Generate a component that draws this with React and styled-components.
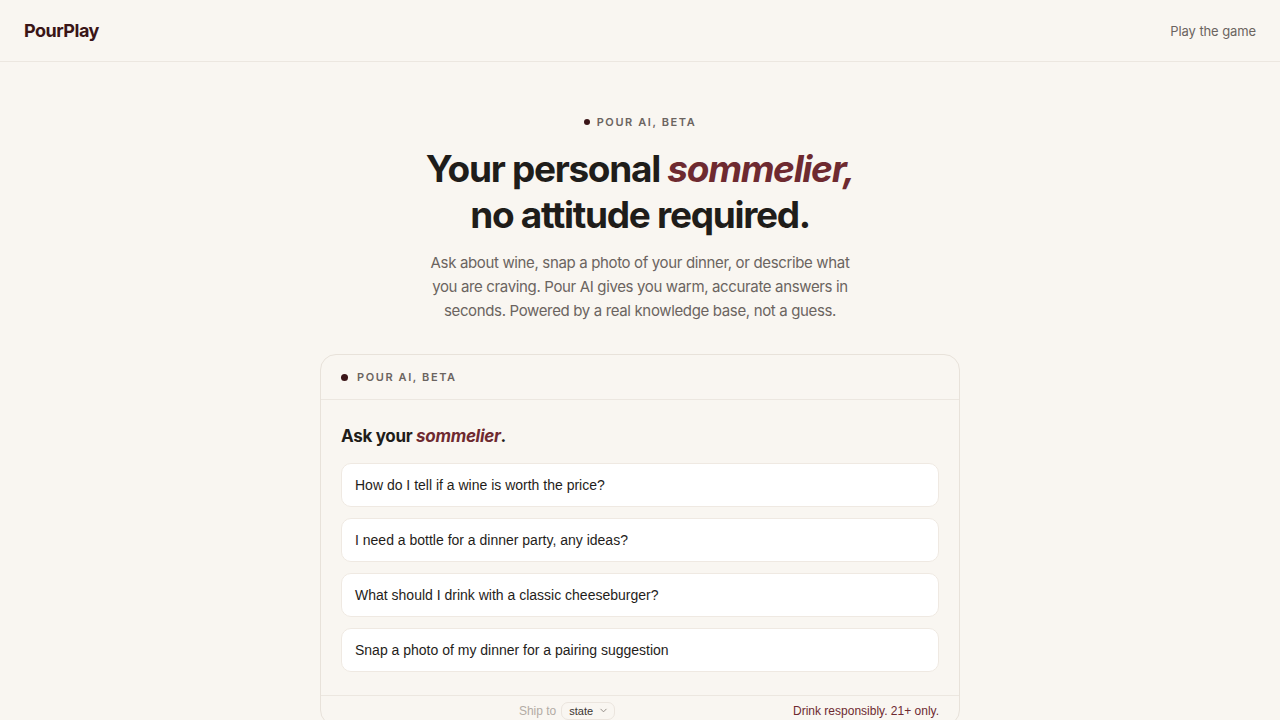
import React from "react";
import styled, { createGlobalStyle } from "styled-components";

const GlobalStyle = createGlobalStyle`
  * { box-sizing: border-box; }
  html, body { margin: 0; padding: 0; }
  body {
    background: #f9f6f1;
    font-family: Inter, "Noto Sans", sans-serif;
    color: #1f1d1a;
    -webkit-font-smoothing: antialiased;
  }
`;

const wine = "#6e2a30";
const ink = "#1f1d1a";
const muted = "#6b6460";

const TopBar = styled.header`
  height: 62px;
  display: flex;
  align-items: center;
  justify-content: space-between;
  padding: 0 24px;
  border-bottom: 1px solid #ece7e0;
`;

const Logo = styled.a`
  font-size: 18px;
  font-weight: 700;
  letter-spacing: -0.5px;
  color: #3a1517;
  text-decoration: none;
`;

const NavLink = styled.a`
  font-size: 13px;
  letter-spacing: -0.1px;
  color: ${muted};
  text-decoration: none;
`;

const Main = styled.main`
  display: flex;
  flex-direction: column;
  align-items: center;
  padding-top: 52px;
`;

const Eyebrow = styled.div`
  display: flex;
  align-items: center;
  gap: 7px;
  font-size: 11px;
  line-height: 16px;
  font-weight: 600;
  letter-spacing: 1.6px;
  text-transform: uppercase;
  color: ${muted};
`;

const Dot = styled.span`
  width: ${(p) => p.$size || 6}px;
  height: ${(p) => p.$size || 6}px;
  border-radius: 50%;
  background: #3b1518;
  flex: none;
`;

const Title = styled.h1`
  margin: 16px 0 0;
  font-size: 37px;
  line-height: 46px;
  font-weight: 700;
  letter-spacing: -1.3px;
  text-align: center;
  color: ${ink};
`;

const Accent = styled.em`
  font-style: italic;
  color: ${wine};
`;

const Lede = styled.p`
  margin: 13px 0 0;
  width: 432px;
  font-size: 15px;
  line-height: 24px;
  letter-spacing: -0.35px;
  text-align: center;
  color: ${muted};
`;

const Card = styled.section`
  margin-top: 31px;
  width: 640px;
  border: 1px solid #e8e2da;
  border-radius: 16px;
  background: #f9f6f1;
  overflow: hidden;
`;

const CardHead = styled.div`
  height: 45px;
  display: flex;
  align-items: center;
  gap: 9px;
  padding: 0 20px;
  border-bottom: 1px solid #ece7e0;
  font-size: 11px;
  font-weight: 600;
  letter-spacing: 1.6px;
  text-transform: uppercase;
  color: ${muted};
`;

const CardBody = styled.div`
  padding: 24px 20px 23px;
`;

const Prompt = styled.h2`
  margin: 0 0 15px;
  font-size: 17px;
  line-height: 24px;
  font-weight: 700;
  letter-spacing: -0.3px;
  color: ${ink};
`;

const Suggestions = styled.div`
  display: flex;
  flex-direction: column;
  gap: 11px;
`;

const Suggestion = styled.button`
  height: 44px;
  display: flex;
  align-items: center;
  padding: 0 13px;
  border: 1px solid #efe9e2;
  border-radius: 10px;
  background: #ffffff;
  font-family: "Liberation Sans", Arial, sans-serif;
  font-size: 14px;
  color: ${ink};
  text-align: left;
  cursor: pointer;
`;

const CardFoot = styled.div`
  height: 30px;
  display: flex;
  align-items: center;
  justify-content: space-between;
  padding: 0 20px;
  border-top: 1px solid #ece7e0;
  font-family: "Liberation Sans", Arial, sans-serif;
  font-size: 12px;
`;

const ShipTo = styled.label`
  display: flex;
  align-items: center;
  gap: 5px;
  color: #b3aca5;
`;

const StatePick = styled.span`
  display: inline-flex;
  align-items: center;
  gap: 6px;
  height: 18px;
  padding: 0 6px 0 7px;
  border: 1px solid #ebe5de;
  border-radius: 7px;
  font-size: 11px;
  color: #3a3531;
`;

const Notice = styled.span`
  color: ${wine};
`;

const prompts = [
  "How do I tell if a wine is worth the price?",
  "I need a bottle for a dinner party, any ideas?",
  "What should I drink with a classic cheeseburger?",
  "Snap a photo of my dinner for a pairing suggestion",
];

export default function App() {
  return (
    <>
      <GlobalStyle />
      <TopBar>
        <Logo href="#">PourPlay</Logo>
        <NavLink href="#">Play the game</NavLink>
      </TopBar>
      <Main>
        <Eyebrow>
          <Dot />
          Pour AI, Beta
        </Eyebrow>
        <Title>
          Your personal <Accent>sommelier,</Accent>
          <br />
          no attitude required.
        </Title>
        <Lede>
          Ask about wine, snap a photo of your dinner, or describe what you are
          craving. Pour AI gives you warm, accurate answers in seconds. Powered
          by a real knowledge base, not a guess.
        </Lede>
        <Card>
          <CardHead>
            <Dot $size={7} />
            Pour AI, Beta
          </CardHead>
          <CardBody>
            <Prompt>
              Ask your <Accent>sommelier</Accent>.
            </Prompt>
            <Suggestions>
              {prompts.map((p) => (
                <Suggestion key={p}>{p}</Suggestion>
              ))}
            </Suggestions>
          </CardBody>
          <CardFoot>
            <span />
            <ShipTo>
              Ship to
              <StatePick>
                state
                <svg width="9" height="9" viewBox="0 0 10 10" fill="none">
                  <path d="M2 3.5 5 6.5 8 3.5" stroke="#8a837d" strokeWidth="1" strokeLinecap="round" strokeLinejoin="round" />
                </svg>
              </StatePick>
            </ShipTo>
            <Notice>Drink responsibly. 21+ only.</Notice>
          </CardFoot>
        </Card>
      </Main>
    </>
  );
}
